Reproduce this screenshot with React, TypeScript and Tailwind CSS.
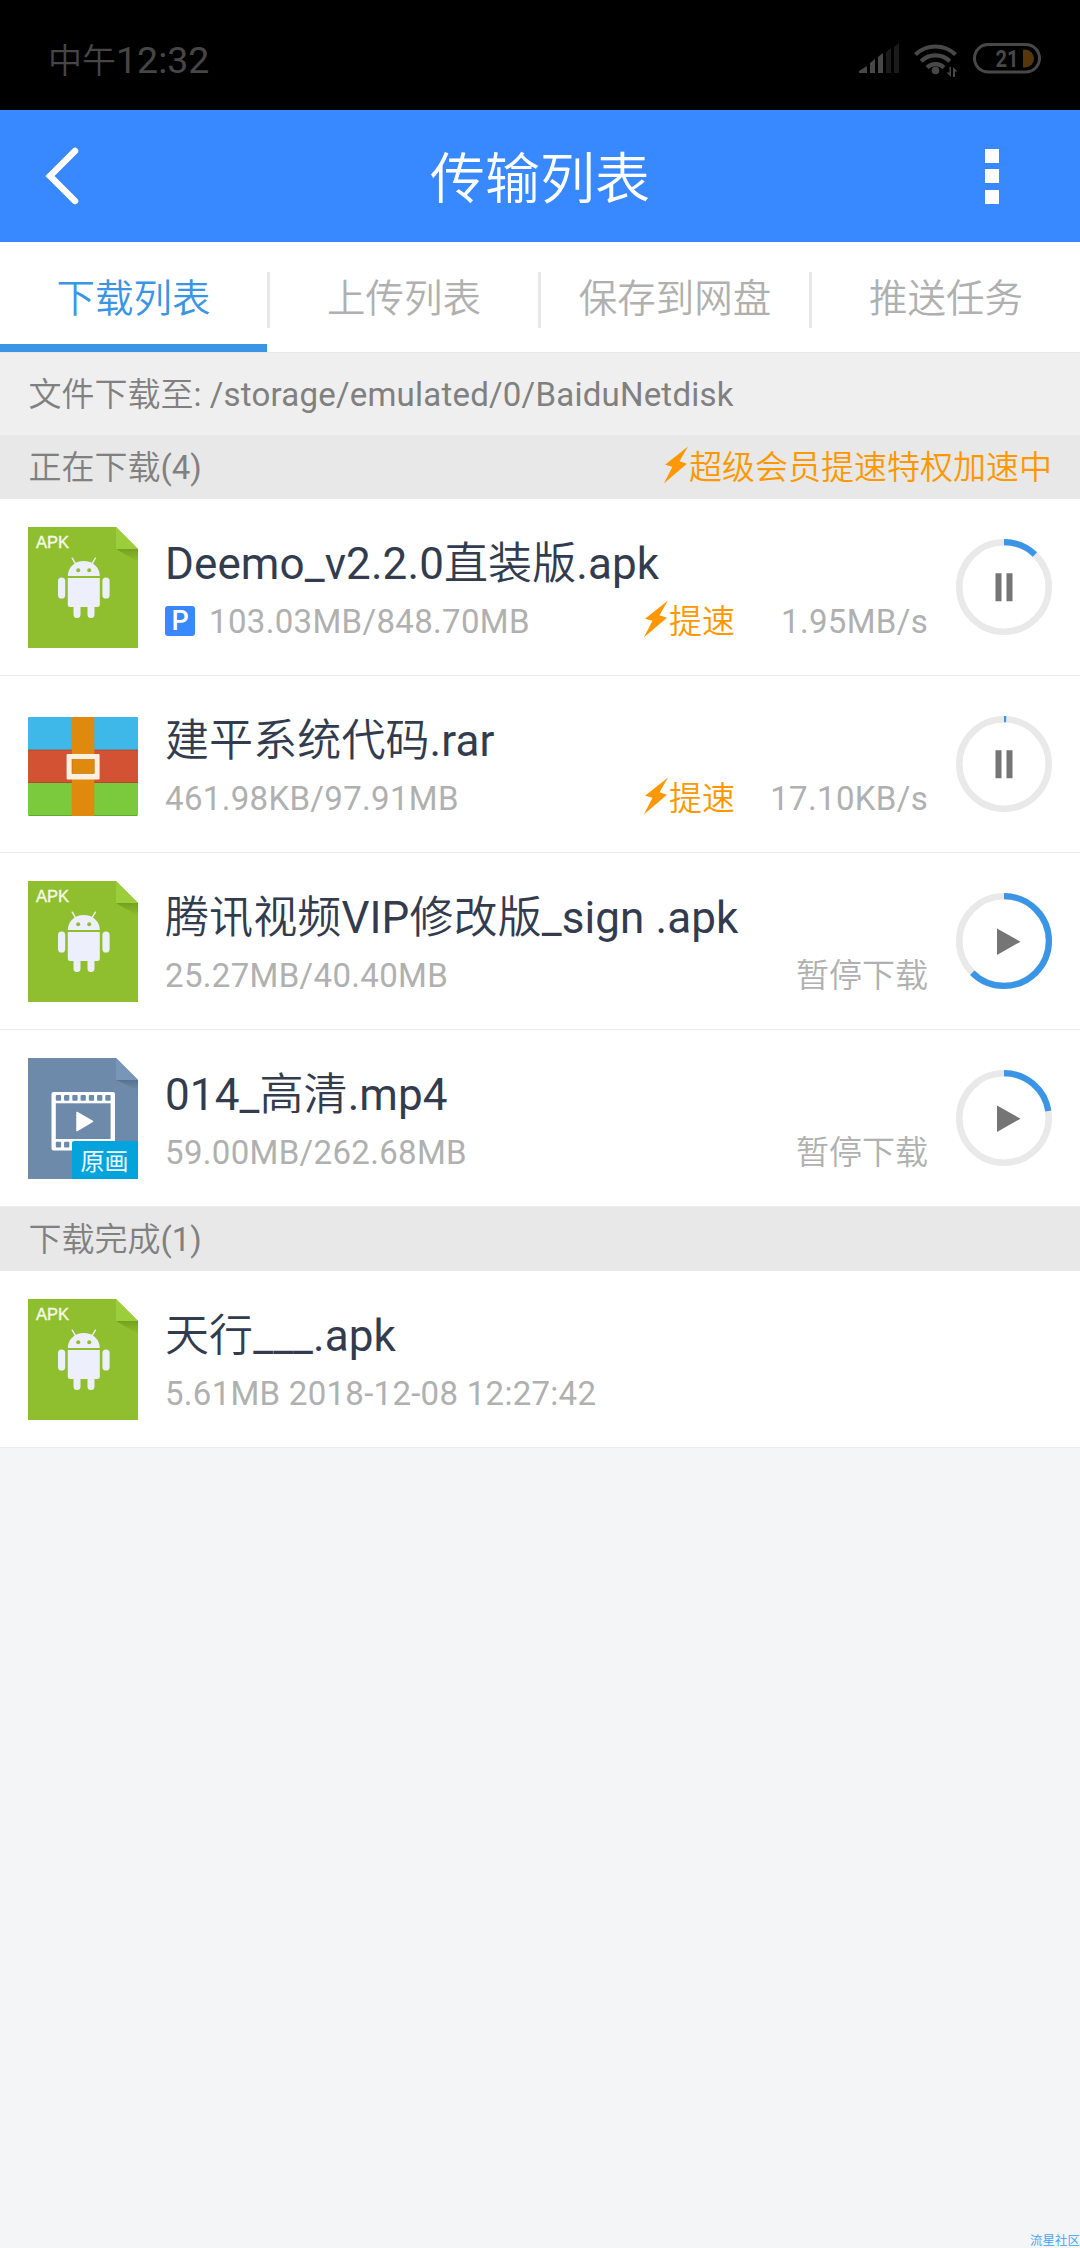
import { clsx } from 'clsx';

type FileKind = 'apk' | 'rar' | 'video';

interface Transfer {
  name: string;
  kind: FileKind;
  size: string;
  percent: number;
  speed?: string;
  badge?: boolean;
}

const TABS = ['下载列表', '上传列表', '保存到网盘', '推送任务'];

const DOWNLOADING: Transfer[] = [
  { name: 'Deemo_v2.2.0直装版.apk', kind: 'apk', size: '103.03MB/848.70MB', percent: 12.1, speed: '1.95MB/s', badge: true },
  { name: '建平系统代码.rar', kind: 'rar', size: '461.98KB/97.91MB', percent: 0.8, speed: '17.10KB/s' },
  { name: '腾讯视频VIP修改版_sign .apk', kind: 'apk', size: '25.27MB/40.40MB', percent: 62.5 },
  { name: '014_高清.mp4', kind: 'video', size: '59.00MB/262.68MB', percent: 22.5 },
];

function ApkIcon() {
  return (
    <svg width="110" height="121" viewBox="0 0 110 121">
      <defs>
        <linearGradient id="apkFold" x1="0" y1="0" x2="0" y2="1">
          <stop offset="0" stopColor="#73a11f" />
          <stop offset="1" stopColor="#8fbf2f" />
        </linearGradient>
      </defs>
      <path d="M0 0h88l22 22v99H0z" fill="#8fbf2f" />
      <path d="M88 22h22v13z" fill="url(#apkFold)" />
      <path d="M88 0l22 22H88z" fill="#9ccd3a" />
      <text x="8" y="20.5" fontSize="16.5" fill="#f4fae6" stroke="#f4fae6" strokeWidth="0.4" fontFamily="'Liberation Sans', sans-serif">APK</text>
      <g fill="#eeeffd">
        <path d="M39.8 49C40 40 47 34 55.8 34S71.6 40 71.8 49z" />
        <path d="M39.8 51h32v26.5a2.5 2.5 0 0 1-2.5 2.5h-27a2.5 2.5 0 0 1-2.5-2.5z" />
        <rect x="30" y="50.5" width="7.2" height="21" rx="3.6" />
        <rect x="74.4" y="50.5" width="7.2" height="21" rx="3.6" />
        <path d="M45.5 78h7v9.5a3.5 3.5 0 0 1-7 0zM59.5 78h7v9.5a3.5 3.5 0 0 1-7 0z" />
      </g>
      <path d="M44.2 31.2l3.6 6M67.4 31.2l-3.6 6" stroke="#eeeffd" strokeWidth="1.4" strokeLinecap="round" />
      <circle cx="50.2" cy="43.3" r="2" fill="#8fbf2f" />
      <circle cx="61.2" cy="43.3" r="2" fill="#8fbf2f" />
    </svg>
  );
}

function RarIcon() {
  return (
    <svg width="110" height="99" viewBox="0 0 110 99" className="mt-[4px]">
      <rect width="110" height="99" rx="1.5" fill="#7bc93c" />
      <path d="M0 33V1.5A1.5 1.5 0 0 1 1.5 0h107a1.5 1.5 0 0 1 1.5 1.5V33z" fill="#3db8e8" />
      <rect y="33" width="110" height="33" fill="#d35233" />
      <path d="M0 33h110M0 65.5h110" stroke="#a9492f" strokeWidth="0.8" />
      <path d="M1 98.5h108" stroke="#5fa92c" />
      <rect x="43.8" width="22.5" height="99" fill="#df890f" />
      <rect x="38.6" y="37" width="33" height="25.5" rx="1" fill="#fdf0e0" />
      <rect x="44" y="42.5" width="22.2" height="14" fill="#df890f" stroke="#b86e08" strokeWidth="0.6" />
    </svg>
  );
}

function VideoIcon() {
  const holes = [0, 1, 2, 3, 4, 5, 6];
  return (
    <div className="relative h-[121px] w-[110px]">
      <svg width="110" height="121" viewBox="0 0 110 121">
        <defs>
          <linearGradient id="videoFold" x1="0" y1="0" x2="0" y2="1">
            <stop offset="0" stopColor="#58708f" />
            <stop offset="1" stopColor="#6d8aab" />
          </linearGradient>
        </defs>
        <path d="M0 0h88l22 22v99H0z" fill="#6d8aab" />
        <path d="M88 22h22v10z" fill="url(#videoFold)" />
        <path d="M88 0l22 22H88z" fill="#7896b8" />
        <rect x="23.5" y="34" width="63.5" height="58.5" rx="2" fill="#fff" />
        <rect x="27.8" y="45.3" width="54.8" height="35.7" fill="#6d8aab" />
        {holes.map(i => (
          <g key={i} fill="#6d8aab">
            <rect x={27.8 + i * 8.25} y="37" width="5.3" height="5.8" rx="1" />
            <rect x={27.8 + i * 8.25} y="83.8" width="5.3" height="5.8" rx="1" />
          </g>
        ))}
        <path d="M49 54.5l15.5 8.9L49 72.5z" fill="#fff" stroke="#fff" strokeWidth="1.5" strokeLinejoin="round" />
      </svg>
      <span className="absolute right-0 bottom-0 flex h-[38px] w-[66px] items-center justify-center rounded-tl-[2px] bg-[#03a4de] font-['Noto_Sans_CJK_SC',sans-serif] text-[24px] leading-none text-[#eefaff]">
        原画
      </span>
    </div>
  );
}

function FileIcon({ kind }: { kind: FileKind }) {
  if (kind === 'rar') return <RarIcon />;
  if (kind === 'video') return <VideoIcon />;
  return <ApkIcon />;
}

function Bolt() {
  return (
    <svg width="26" height="38" viewBox="0 0 26 38" className="mb-[6px] shrink-0">
      <path d="M25 .5L2 18.8l7.5 2L.8 37.5 24 17.8l-7.5-2.5z" fill="#ff9800" />
    </svg>
  );
}

function ProgressButton({ percent, running }: { percent: number; running: boolean }) {
  return (
    <button className="h-24 w-24 shrink-0">
      <svg width="96" height="96" viewBox="0 0 96 96">
        <circle cx="48" cy="48" r="44.7" fill="none" stroke="#e9e9e9" strokeWidth="6.6" />
        <circle
          cx="48"
          cy="48"
          r="44.9"
          fill="none"
          stroke="#3a95e6"
          strokeWidth="6.2"
          pathLength={100}
          strokeDasharray={`${percent} 100`}
          transform="rotate(-90 48 48)"
        />
        {running ? (
          <path d="M39.5 34.2h6v28h-6zM50.5 34.2h6v28h-6z" fill="#757575" />
        ) : (
          <path d="M41 35.5l23.5 13.2L41 62z" fill="#757575" />
        )}
      </svg>
    </button>
  );
}

function TransferRow({ item }: { item: Transfer }) {
  const running = Boolean(item.speed);
  return (
    <li className="flex h-[177px] items-center border-b border-[#ececec] bg-white pr-7 pl-[27.5px]">
      <div className="w-[110px] shrink-0">
        <FileIcon kind={item.kind} />
      </div>
      <div className="ml-[27.5px] flex flex-1 flex-col pt-[10px]">
        <div className="h-[60px] text-[44px] leading-[57px] tracking-[0.1px] whitespace-pre text-[#333c4f]">{item.name}</div>
        <div className="flex h-[52px] items-center text-[33px] leading-[54px] text-[#b0b0b0]">
          {item.badge && (
            <span className="mr-[14px] mb-[2px] flex h-[30px] w-[30px] items-center justify-center rounded-[3px] bg-[#3888ff] text-[27px] leading-none font-medium text-white">P</span>
          )}
          <span className="tracking-[0.33px]">{item.size}</span>
          {running && (
            <span className="ml-auto flex items-center text-[#ff9800]">
              <Bolt />
              提速
            </span>
          )}
          <span className={clsx('text-right', running ? 'w-[193px] tracking-[0.33px]' : 'ml-auto')}>{item.speed ?? '暂停下载'}</span>
        </div>
      </div>
      <div className="ml-7 flex">
        <ProgressButton percent={item.percent} running={running} />
      </div>
    </li>
  );
}

function StatusBar() {
  return (
    <div className="flex h-[110px] items-center justify-between bg-black pt-[8px] pr-[38px] pl-[48px] text-[#464646]">
      <div className="flex items-baseline pt-[2px]">
        <span className="text-[34px]">中午</span>
        <span className="text-[37.5px]">12:32</span>
      </div>
      <svg width="184" height="36" viewBox="0 0 184 36" className="mt-[3px]">
        <path d="M1 30v-2l8-5v7zM12 30V20l5-4v14zM20 30V14l5-4v20z" fill="#484848" />
        <path d="M28 30V9l5-4v25zM36 30V4l5-4v30z" fill="#1b1b1b" />
        <g fill="none" stroke="#484848" strokeWidth="4.2">
          <path d="M57.5 11.5a29 29 0 0 1 40 0" />
          <path d="M63.2 18.2a20.5 20.5 0 0 1 28.6 0" />
          <path d="M69 24.6a12 12 0 0 1 17 0" />
        </g>
        <circle cx="77.5" cy="27.5" r="3.8" fill="#484848" />
        <path d="M93 24v10l-4.5-4.5h3V24zM95 34V24l4.5 4.5H97V34z" fill="#484848" />
        <rect x="116.5" y="1.5" width="65" height="27.5" rx="13.7" fill="none" stroke="#484848" strokeWidth="3" />
        <path d="M165 6.5h2a9 9 0 0 1 0 18h-2z" fill="#56360c" />
        <text x="137.5" y="24" fontSize="24" fontWeight="700" fill="#484848" fontFamily="Roboto, sans-serif" textLength="23" lengthAdjust="spacingAndGlyphs">21</text>
      </svg>
    </div>
  );
}

function Header() {
  return (
    <header className="grid h-[132px] grid-cols-[1fr_auto_1fr] items-center bg-[#3888ff] pr-[81px] pl-[45px] text-white">
      <svg width="34" height="58" viewBox="0 0 34 58">
        <path d="M30 4L5 29l25 25" fill="none" stroke="#fff" strokeWidth="6.5" strokeLinecap="round" />
      </svg>
      <h1 className="pt-[6px] pl-[36px] text-[55px] leading-[80px]">传输列表</h1>
      <div className="flex flex-col items-end gap-[6.5px]">
        <i className="h-[14px] w-[14px] bg-white" />
        <i className="h-[14px] w-[14px] bg-white" />
        <i className="h-[14px] w-[14px] bg-white" />
      </div>
    </header>
  );
}

function Tabs() {
  return (
    <nav className="grid h-[110px] grid-cols-[267px_271px_271px_271px] bg-white text-[38.5px]">
      {TABS.map((tab, i) => (
        <div key={tab} className="flex items-center">
          {i > 0 && <span className="mt-[5px] h-[56px] w-[3px] bg-[#e8e8e8]" />}
          <button
            className={clsx(
              'h-full flex-1 whitespace-nowrap',
              i === 0 ? 'border-b-8 border-[#3a95e6] pt-[12px] text-[#3a95e6]' : 'pt-[4px] text-[#b0b0b0]',
            )}
          >
            {tab}
          </button>
        </div>
      ))}
    </nav>
  );
}

export default function App() {
  return (
    <div className="relative h-[2248px] w-[1080px] overflow-hidden bg-[#f4f5f7] font-['Roboto','Noto_Sans_CJK_SC_DemiLight','Noto_Sans_CJK_SC',sans-serif]">
      <StatusBar />
      <Header />
      <Tabs />

      <div className="h-[83px] border-t border-[#e8e8e8] bg-[#efefef] pl-[28.5px] text-[33px] leading-[84px] text-[#808080]">
        文件下载至: <span className="tracking-[0.22px]">/storage/emulated/0/BaiduNetdisk</span>
      </div>

      <div className="flex h-16 items-center justify-between bg-[#e8e8e8] pt-[2px] pr-[28px] pl-[28.5px] text-[33px] leading-[64px] text-[#808080]">
        <span>正在下载(4)</span>
        <span className="flex items-center text-[#ff9800]">
          <Bolt />
          超级会员提速特权加速中
        </span>
      </div>
      <ul>
        {DOWNLOADING.map(item => (
          <TransferRow key={item.name} item={item} />
        ))}
      </ul>

      <div className="h-16 bg-[#e8e8e8] pl-[28.5px] text-[33px] leading-[66px] text-[#808080]">下载完成(1)</div>
      <div className="flex h-[177px] items-center border-b border-[#ececec] bg-white pl-[27.5px]">
        <ApkIcon />
        <div className="ml-[27.5px] pt-[8px]">
          <div className="h-[60px] text-[44px] leading-[58px] tracking-[0.1px] text-[#333c4f]">天行___.apk</div>
          <div className="h-[52px] text-[33px] leading-[54px] tracking-[0.28px] text-[#b0b0b0]">5.61MB 2018-12-08 12:27:42</div>
        </div>
      </div>

      <span className="absolute right-0 bottom-0 text-[12.5px] leading-[14px] whitespace-nowrap text-[#3aa3f2]">流星社区</span>
    </div>
  );
}
